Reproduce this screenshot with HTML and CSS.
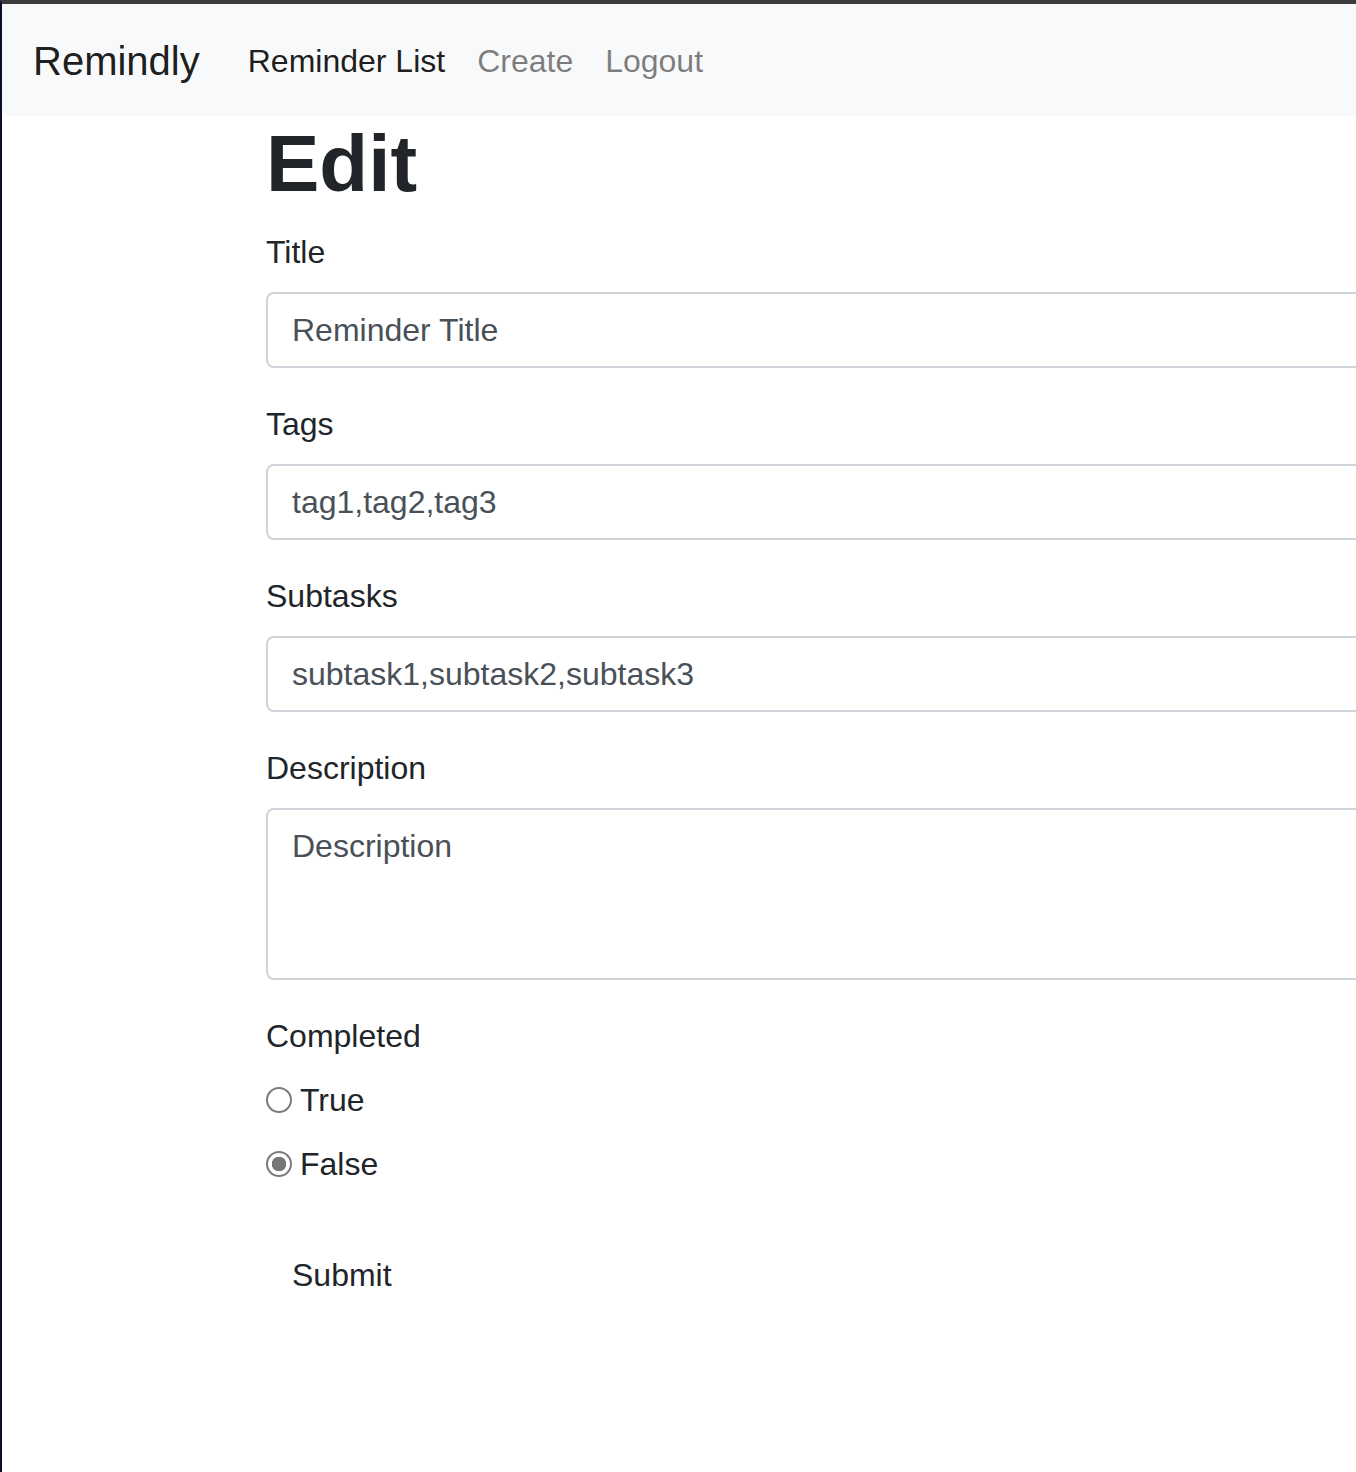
FILE: index.html
```html
<!DOCTYPE html>
<html lang="en">
<head>
<meta charset="utf-8">
<title>Remindly - Edit</title>
<link rel="stylesheet" href="styles.css">
</head>
<body>
<div class="frame">
  <nav class="navbar">
    <a class="brand" href="#">Remindly</a>
    <ul class="nav">
      <li><a class="nav-link active" href="#">Reminder List</a></li>
      <li><a class="nav-link" href="#">Create</a></li>
      <li><a class="nav-link" href="#">Logout</a></li>
    </ul>
  </nav>
  <main class="content">
    <h1 class="title">Edit</h1>
    <form class="form">
      <div class="group">
        <label class="label" for="title">Title</label>
        <input class="control" id="title" type="text" placeholder="Reminder Title">
      </div>
      <div class="group">
        <label class="label" for="tags">Tags</label>
        <input class="control" id="tags" type="text" value="tag1,tag2,tag3">
      </div>
      <div class="group">
        <label class="label" for="subtasks">Subtasks</label>
        <input class="control" id="subtasks" type="text" value="subtask1,subtask2,subtask3">
      </div>
      <div class="group">
        <label class="label" for="desc">Description</label>
        <textarea class="control area" id="desc" rows="3" placeholder="Description"></textarea>
      </div>
      <div class="group">
        <div class="label">Completed</div>
        <div class="check">
          <input class="radio" type="radio" name="completed" id="t">
          <label class="check-label" for="t">True</label>
        </div>
        <div class="check">
          <input class="radio" type="radio" name="completed" id="f" checked>
          <label class="check-label" for="f">False</label>
        </div>
      </div>
      <button class="btn" type="submit">Submit</button>
    </form>
  </main>
</div>
</body>
</html>
```

FILE: styles.css
```css
html, body {
  margin: 0;
  padding: 0;
  background: #ffffff;
  overflow: hidden;
}

body {
  font-family: "Liberation Sans", Arial, sans-serif;
  color: #212529;
}

.frame {
  min-height: 1468px;
  border-top: 4px solid #3c3c3e;
  border-left: 2px solid #0d0d2b;
}

.navbar {
  display: flex;
  align-items: center;
  height: 112px;
  padding: 2px 32px 0 31px;
  background: #f8f9fa;
  box-sizing: border-box;
}

.brand {
  font-size: 40px;
  line-height: 60px;
  margin-right: 32px;
  color: rgba(0, 0, 0, 0.9);
  text-decoration: none;
}

.nav {
  display: flex;
  list-style: none;
  margin: 0;
  padding: 0;
}

.nav-link {
  display: block;
  padding: 16px;
  font-size: 32px;
  line-height: 48px;
  color: rgba(0, 0, 0, 0.5);
  text-decoration: none;
}

.nav-link.active {
  color: rgba(0, 0, 0, 0.9);
}

.content {
  padding-left: 264px;
}

.title {
  margin: 0 0 16px;
  font-size: 80px;
  line-height: 96px;
  font-weight: 700;
  color: #212529;
}

.form {
  width: 1200px;
}

.group {
  margin-bottom: 32px;
}

.label {
  display: block;
  font-size: 32px;
  line-height: 48px;
  margin-bottom: 16px;
  color: #212529;
}

.control {
  display: block;
  width: 100%;
  height: 76px;
  box-sizing: border-box;
  padding: 12px 24px;
  font-family: "Liberation Sans", Arial, sans-serif;
  font-size: 32px;
  line-height: 48px;
  color: #495057;
  background: #ffffff;
  border: 2px solid #ced4da;
  border-radius: 8px;
  outline: none;
}

.control::placeholder {
  color: #495057;
  opacity: 1;
}

.area {
  height: 172px;
  resize: none;
}

.check {
  display: flex;
  align-items: center;
  gap: 8px;
  height: 48px;
  margin-bottom: 16px;
}

.radio {
  appearance: none;
  -webkit-appearance: none;
  margin: 0;
  width: 26px;
  height: 26px;
  box-sizing: border-box;
  border: 2px solid #7a7a7a;
  border-radius: 50%;
  background: #ffffff;
  flex: none;
}

.radio:checked {
  background: radial-gradient(circle, #767676 0 7px, #ffffff 7.5px 100%);
}

.check-label {
  font-size: 32px;
  line-height: 48px;
  color: #212529;
}

.btn {
  display: inline-block;
  height: 76px;
  margin-top: 17px;
  padding: 12px 24px;
  font-family: "Liberation Sans", Arial, sans-serif;
  font-size: 32px;
  line-height: 48px;
  color: #212529;
  background: transparent;
  border: 2px solid transparent;
  border-radius: 8px;
  cursor: pointer;
}
```
